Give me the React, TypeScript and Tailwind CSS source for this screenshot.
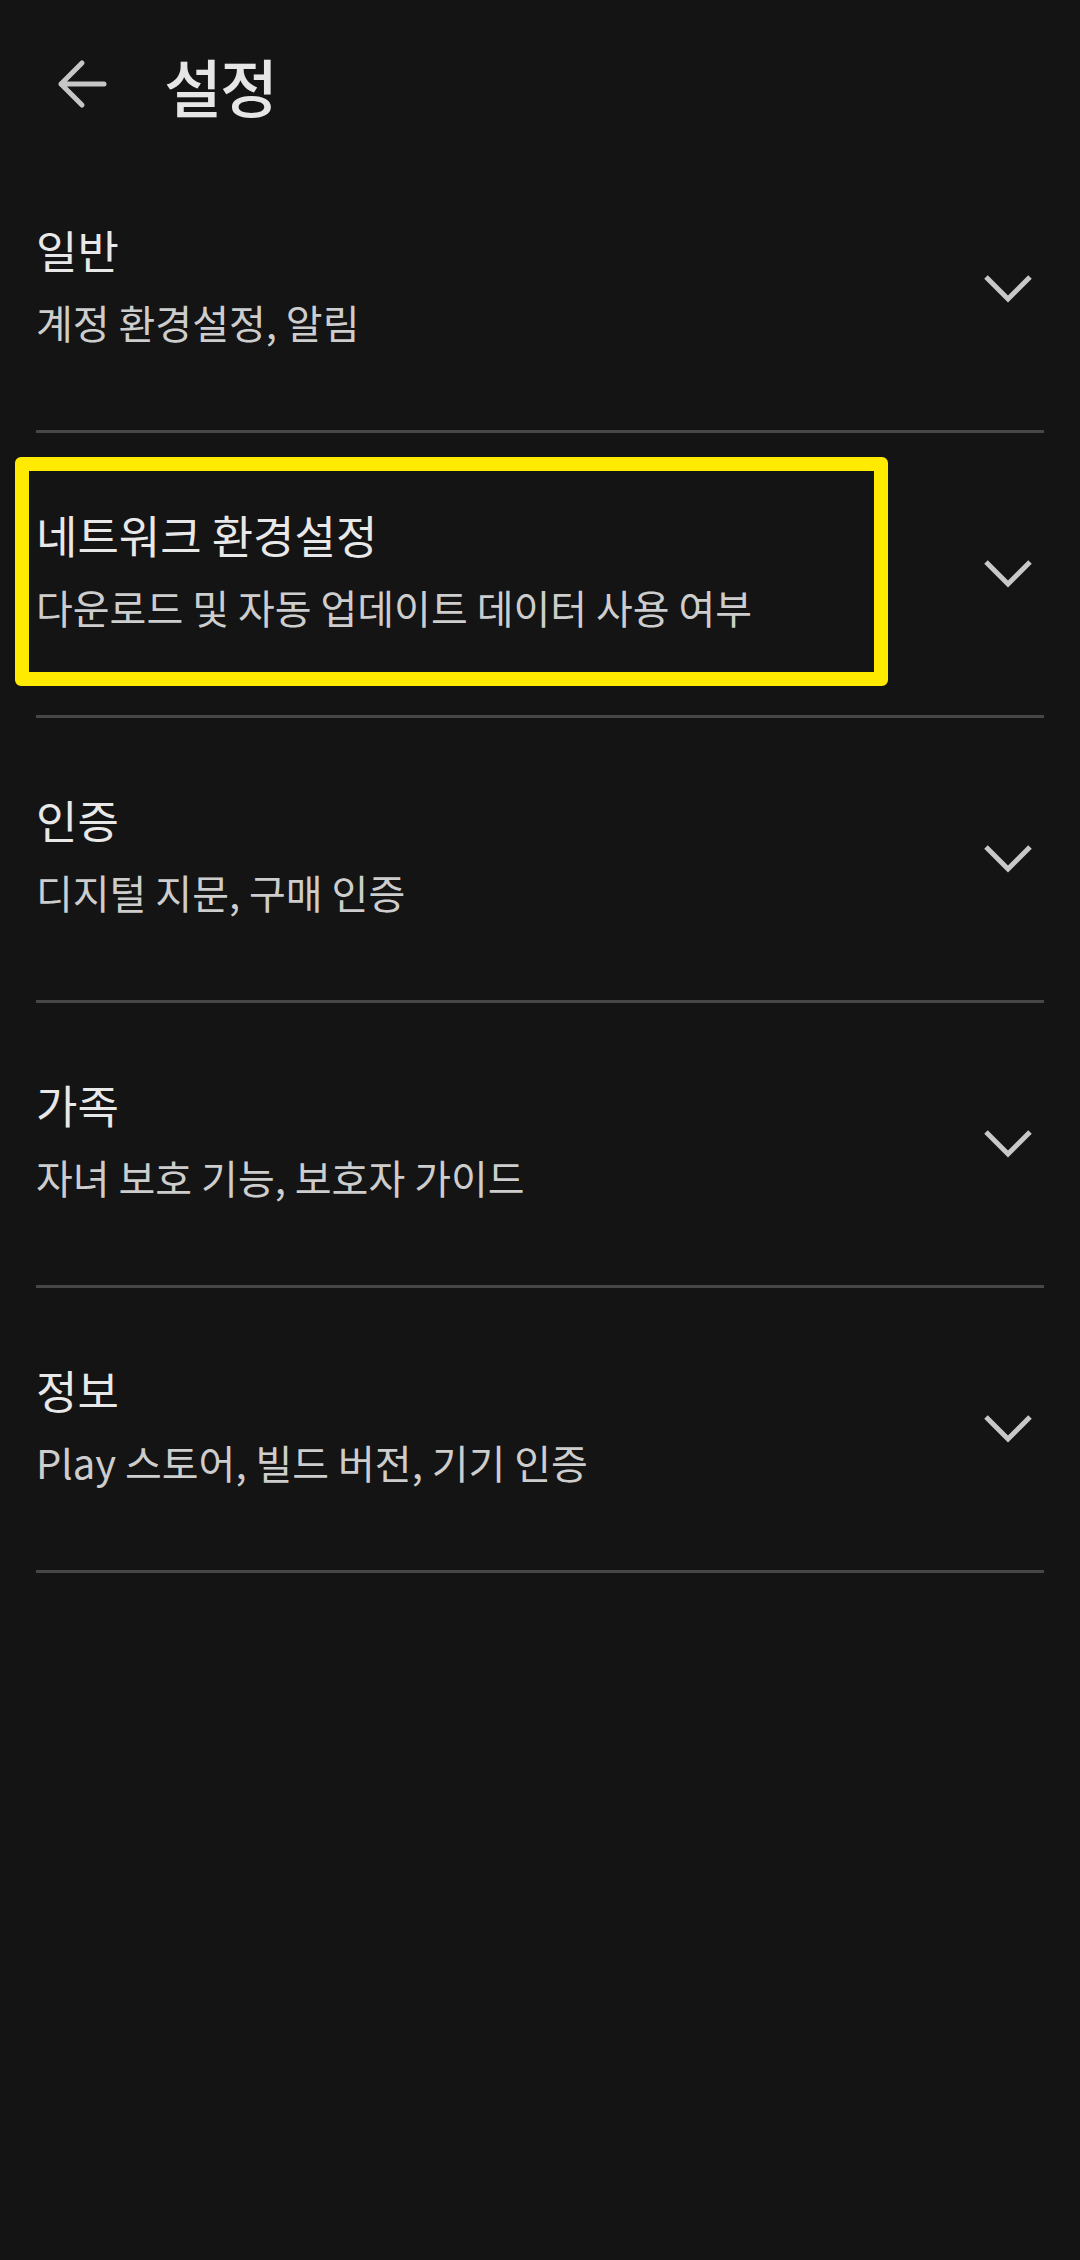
import React from 'react';

interface Section {
  title: string;
  desc: string;
  highlighted?: boolean;
}

const sections: Section[] = [
  { title: '일반', desc: '계정 환경설정, 알림' },
  { title: '네트워크 환경설정', desc: '다운로드 및 자동 업데이트 데이터 사용 여부', highlighted: true },
  { title: '인증', desc: '디지털 지문, 구매 인증' },
  { title: '가족', desc: '자녀 보호 기능, 보호자 가이드' },
  { title: '정보', desc: 'Play 스토어, 빌드 버전, 기기 인증' },
];

const BackArrow = () => (
  <svg width="50" height="50" viewBox="0 0 50 50" fill="none">
    <path d="M47 25H4 M25 4 L4 25 L25 46" stroke="#c6c6c6" strokeWidth="5" strokeLinecap="round" strokeLinejoin="round" />
  </svg>
);

const Chevron = () => (
  <svg width="52" height="34" viewBox="0 0 52 34" fill="none">
    <path d="M4 5 L26 27 L48 5" stroke="#c8c8c8" strokeWidth="5" />
  </svg>
);

const App: React.FC = () => {
  return (
    <div
      className="min-h-[2260px] w-full bg-[#141414]"
      style={{ fontFamily: '"Noto Sans CJK KR", Roboto, sans-serif' }}
    >
      <header className="h-[148px] pt-[20px] flex items-center pl-[57px]">
        <BackArrow />
        <h1 className="ml-[57px] text-[63px] leading-none tracking-[-2px] text-[#e6e6e6] font-medium">설정</h1>
      </header>

      <div className="px-[36px]">
        {sections.map((s) => (
          <div key={s.title}>
            <div className="relative h-[282px] flex items-center justify-between">
              <div className="flex flex-col mb-[8px]">
                <span className="text-[45px] leading-[52px] text-[#e8e8e8]">{s.title}</span>
                <span className="mt-[22px] text-[40px] leading-[48px] text-[#cdcdcd]">{s.desc}</span>
              </div>
              <div className="pr-[10px]">
                <Chevron />
              </div>
              {s.highlighted && (
                <div className="absolute top-[24px] left-[-21px] w-[873px] h-[229px] border-[14px] border-[#ffea00] rounded-[6px]" />
              )}
            </div>
            <div className="h-[3px] bg-[#474747]" />
          </div>
        ))}
      </div>
    </div>
  );
};

export default App;
